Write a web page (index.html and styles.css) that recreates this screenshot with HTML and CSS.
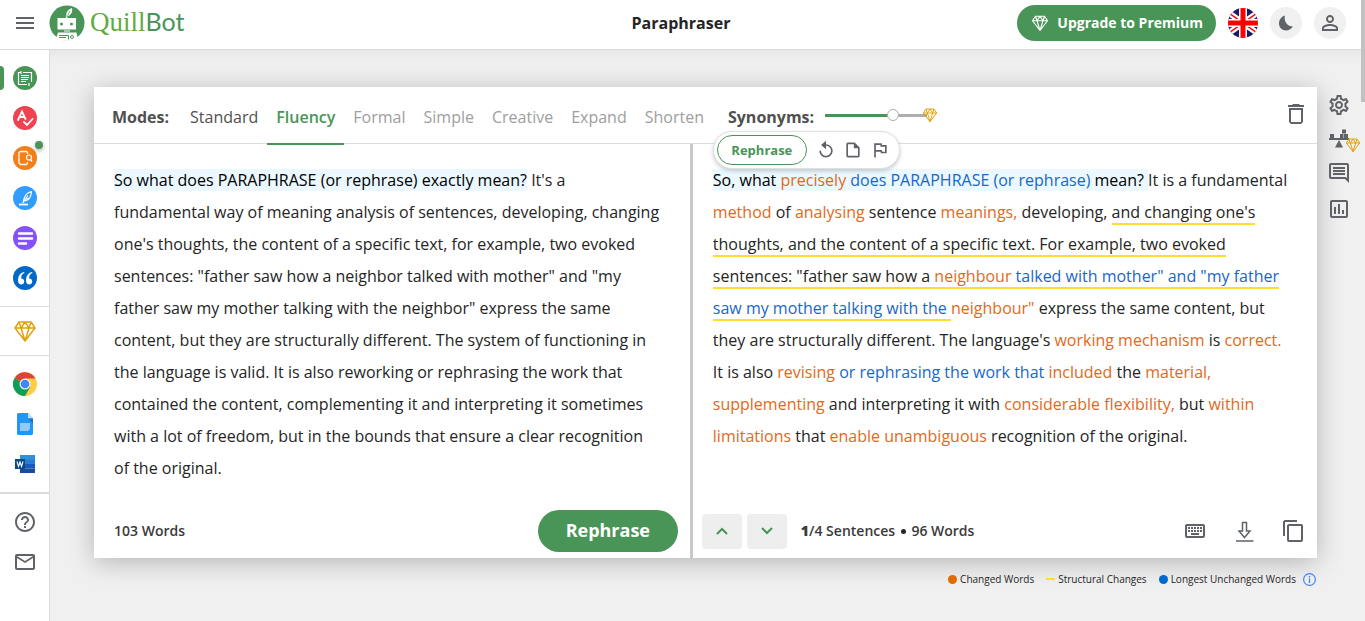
FILE: index.html
```html
<!DOCTYPE html>
<html lang="en">
<head>
    <meta charset="UTF-8">
    <meta name="viewport" content="width=device-width, initial-scale=1.0">
    <title>Paraphraser - QuillBot</title>
    <link rel="stylesheet" href="styles.css">
</head>
<body>
<!-- Shared icons -->
<svg class="sprite" aria-hidden="true">
    <symbol id="gem" viewBox="0 0 24 24">
        <path d="M6 3h12l4 6-10 13L2 9zM2 9h20M6 3l2 6 4-6 4 6 2-6M8 9l4 13 4-13" fill="none" stroke="currentColor" stroke-width="1.5" stroke-linejoin="round"/>
    </symbol>
</svg>

<header class="topbar">
    <div class="brand">
        <button class="icon-btn" aria-label="Menu">
            <svg width="18" height="12" viewBox="0 0 18 12" fill="#5f6368"><path d="M0 0h18v2H0zM0 5h18v2H0zM0 10h18v2H0z"/></svg>
        </button>
        <a class="logo" href="#">
            <svg width="36" height="36" viewBox="0 0 36 36">
                <circle cx="18" cy="18" r="17.5" fill="#499557"/>
                <path d="M17.500 12C16.500 8 18.500 4.500 23 3c.8 4-1 7.500-5.500 9z" fill="#fff"/>
                <path d="M17.500 13l3.500-7" stroke="#499557" stroke-width=".7"/>
                <path d="M8.500 13h8l1-2 1 2h8.500v11.500H8.500z" fill="#fff"/>
                <circle cx="12.500" cy="19" r="1.500" fill="#499557"/>
                <circle cx="22.500" cy="19" r="1.500" fill="#499557"/>
                <path d="M15 25.500h6v1h-6z" fill="#fff"/>
                <path d="M9 27.500h18.500l1 5-3 2.500-7 1-7-1-4-2.500z" fill="#fff"/>
                <path d="M10 30.500h9.500v4M10 32.500h7" fill="none" stroke="#499557"/>
                <circle cx="23" cy="32" r="1.500" fill="none" stroke="#499557"/>
            </svg>
            <span class="logo-text"><span class="logo-quill">Quill</span><span class="logo-bot">Bot</span></span>
        </a>
    </div>
    <h1>Paraphraser</h1>
    <div class="account">
        <button class="premium"><svg width="18" height="18"><use href="#gem"/></svg>Upgrade to Premium</button>
        <button class="icon-btn" aria-label="Language">
            <svg width="30" height="30" viewBox="0 0 30 30">
                <clipPath id="round"><circle cx="15" cy="15" r="15"/></clipPath>
                <g clip-path="url(#round)">
                    <path fill="#1a1a66" d="M0 0h30v30H0z"/>
                    <path d="M-2 3l34 24M-2 27L32 3" stroke="#fff" stroke-width="6"/>
                    <path d="M-2 3l34 24M-2 27L32 3" stroke="#f00" stroke-width="1.500"/>
                    <path d="M15 0v30M0 15h30" stroke="#fff" stroke-width="8"/>
                    <path d="M15 0v30M0 15h30" stroke="#f00" stroke-width="5"/>
                </g>
            </svg>
        </button>
        <button class="round-btn" aria-label="Dark mode">
            <svg width="16" height="16" viewBox="0 0 16 16" fill="#5f6368"><path d="M7 .5C5.500 5 8.500 11.500 15 11.500 13 14 10.500 15.500 8 15.500 4 15.500 1 12.500 1 8.500 1 4.500 3.500 1.500 7 .5z"/></svg>
        </button>
        <button class="round-btn" aria-label="Profile">
            <svg width="24" height="24" viewBox="0 0 24 24" fill="#5f6368"><path d="M12 5.900a2.100 2.100 0 1 1 0 4.200 2.100 2.100 0 0 1 0-4.200m0 9c2.970 0 6.100 1.460 6.100 2.100v1.100H5.900V17c0-.64 3.130-2.100 6.100-2.100M12 4C9.790 4 8 5.790 8 8s1.790 4 4 4 4-1.790 4-4-1.790-4-4-4zm0 9c-2.670 0-8 1.340-8 4v3h16v-3c0-2.660-5.330-4-8-4z"/></svg>
        </button>
    </div>
</header>

<div class="layout">
    <nav class="sidebar" aria-label="Tools">
        <div class="group">
            <a class="tool active" href="#" aria-label="Paraphraser">
                <svg width="24" height="24" viewBox="0 0 24 24">
                    <circle cx="12" cy="12" r="12" fill="#499557"/>
                    <path d="M10 6.500h8.500V16M14 18.500H5.500V6.500H8M8 5v3M16 17v3" fill="none" stroke="#fff" stroke-width="1.200"/>
                    <path d="M8 9.500h8M8 11.500h8M8 13.500h7M8 15.500h5" stroke="#fff"/>
                </svg>
            </a>
            <a class="tool" href="#" aria-label="Grammar Checker">
                <svg width="24" height="24" viewBox="0 0 24 24">
                    <circle cx="12" cy="12" r="12" fill="#ee4350"/>
                    <path d="M5 14L9 5.500l3.500 7.500M6.500 11h5M11 16l3 3 5.500-6" fill="none" stroke="#fff" stroke-width="1.800" stroke-linecap="round"/>
                </svg>
            </a>
            <a class="tool" href="#" aria-label="Plagiarism Checker">
                <svg width="24" height="24" viewBox="0 0 24 24">
                    <circle cx="12" cy="12" r="12" fill="#f57f17"/>
                    <path d="M14.500 8V6.500l-1-1H7.500l-1.500 1V17l1.500 1.500h6l1-1.500v-1" fill="none" stroke="#fff" stroke-width="1.300"/>
                    <circle cx="16" cy="11.500" r="2.500" fill="none" stroke="#fff" stroke-width="1.200"/>
                    <path d="M17.500 13.500l1.500 2" stroke="#fff" stroke-width="1.300"/>
                </svg>
                <span class="dot-new"></span>
            </a>
            <a class="tool" href="#" aria-label="Co-Writer">
                <svg width="24" height="24" viewBox="0 0 24 24">
                    <circle cx="12" cy="12" r="12" fill="#339cff"/>
                    <path d="M10 17l1-4c1-4 3-6.500 7.500-7.500-.5 3-.5 4.500-2 7-1.500 2-3 2-5 2.500M11 15.500l4-6M13 13l4-1" fill="none" stroke="#fff" stroke-width="1.200"/>
                    <path d="M6 18.500h9" stroke="#fff" stroke-width="1.800"/>
                </svg>
            </a>
            <a class="tool" href="#" aria-label="Summarizer">
                <svg width="24" height="24" viewBox="0 0 24 24">
                    <circle cx="12" cy="12" r="12" fill="#8352fd"/>
                    <path d="M6 7.500h13M6 12.500h13M6 17.500h7" stroke="#fff" stroke-width="2.500" stroke-linecap="round"/>
                </svg>
            </a>
            <a class="tool" href="#" aria-label="Citation Generator">
                <svg width="24" height="24" viewBox="0 0 24 24">
                    <circle cx="12" cy="12" r="12" fill="#0068c9"/>
                    <path id="quote" d="M11 6C7 7 5 10 5 14.500 5 17 6.500 18.500 8.200 18.500c1.700 0 3-1.200 3-3s-1.200-3-3-3C8.200 9.500 9 8 11.500 7z" fill="#fff"/>
                    <use href="#quote" x="8"/>
                </svg>
            </a>
        </div>
        <div class="group premium-group">
            <a class="tool gold" href="#" aria-label="Premium"><svg width="26" height="24"><use href="#gem"/></svg></a>
        </div>
        <div class="group extensions">
            <a class="tool" href="#" aria-label="Chrome extension">
                <svg width="24" height="24" viewBox="0 0 24 24">
                    <circle cx="12" cy="12" r="12" fill="#ffce44"/>
                    <path d="M12 12L1.600 6A12 12 0 0 0 12 24l5.200-9z" fill="#0f9d58"/>
                    <path d="M12 12L1.600 6A12 12 0 0 1 22.400 6.500H12z" fill="#db4437"/>
                    <circle cx="12" cy="12" r="5.500" fill="#f1f1f1"/>
                    <circle cx="12" cy="12" r="4.300" fill="#4285f4"/>
                </svg>
            </a>
            <a class="tool" href="#" aria-label="Google Docs extension">
                <svg width="16" height="22" viewBox="0 0 16 22">
                    <path d="M1 0h10l5 5.500V21l-1 1H1l-1-1V1z" fill="#2196f3"/>
                    <path d="M11 0l5 5.500h-5z" fill="#bbdefb"/>
                    <path d="M11 5.500h5V11z" fill="#1976d2"/>
                    <path d="M3 10h10v6l-2 2H3z" fill="#90caf9"/>
                </svg>
            </a>
            <a class="tool" href="#" aria-label="Word extension">
                <svg width="20" height="18" viewBox="0 0 20 18">
                    <path d="M5 0h15v5H5z" fill="#2b94d6"/>
                    <path d="M5 4.500h15V9H5z" fill="#2b7cd3"/>
                    <path d="M5 9h15v4.500H5z" fill="#185abd"/>
                    <path d="M5 13.500h15V18H5z" fill="#1a4a9c"/>
                    <path d="M0 4h10v10H0z" fill="#0a4a8c"/>
                    <path d="M2 6.500l1.500 5L5 7l1.500 4.500L8 6.500" fill="none" stroke="#fff" stroke-width="1.100"/>
                </svg>
            </a>
        </div>
        <div class="group help">
            <a class="tool" href="#" aria-label="Help">
                <svg width="24" height="24" viewBox="0 0 24 24" fill="#5f6368"><path d="M11 18h2v-2h-2v2zm1-16C6.480 2 2 6.480 2 12s4.480 10 10 10 10-4.480 10-10S17.520 2 12 2zm0 18c-4.410 0-8-3.590-8-8s3.590-8 8-8 8 3.590 8 8-3.590 8-8 8zm0-14c-2.210 0-4 1.790-4 4h2c0-1.100.9-2 2-2s2 .9 2 2c0 2-3 1.750-3 5h2c0-2.250 3-2.500 3-5 0-2.210-1.790-4-4-4z"/></svg>
            </a>
            <a class="tool" href="#" aria-label="Contact us">
                <svg width="24" height="24" viewBox="0 0 24 24" fill="#5f6368"><path d="M22 6c0-1.100-.9-2-2-2H4c-1.100 0-2 .9-2 2v12c0 1.100.9 2 2 2h16c1.100 0 2-.9 2-2V6zm-2 0l-8 5-8-5h16zm0 12H4V8l8 5 8-5v10z"/></svg>
            </a>
        </div>
    </nav>

    <main class="content">
        <section class="card">
            <div class="modes">
                <strong class="modes-label">Modes:</strong>
                <button class="mode free">Standard</button>
                <button class="mode selected">Fluency</button>
                <button class="mode">Formal</button>
                <button class="mode">Simple</button>
                <button class="mode">Creative</button>
                <button class="mode">Expand</button>
                <button class="mode">Shorten</button>
                <label class="synonyms-label" for="synonyms">Synonyms:</label>
                <input type="range" id="synonyms" min="0" max="100" value="69">
                <svg class="slider-gem" width="16" height="16"><use href="#gem"/></svg>
                <button class="icon-btn trash" aria-label="Delete text">
                    <svg width="16" height="22" viewBox="0 0 16 22" fill="#5f6368"><path d="M5 0h6l1 1h4v2H0V1h4zM1 4h14v14l-2 2H3l-2-2zm2 2v12h10V6z"/></svg>
                </button>
            </div>

            <div class="panes">
                <!-- Original text -->
                <div class="pane">
                    <p class="text"><span class="current">So what does PARAPHRASE (or rephrase) exactly mean?</span> It's a<br>
                        fundamental way of meaning analysis of sentences, developing, changing<br>
                        one's thoughts, the content of a specific text, for example, two evoked<br>
                        sentences: "father saw how a neighbor talked with mother" and "my<br>
                        father saw my mother talking with the neighbor" express the same<br>
                        content, but they are structurally different. The system of functioning in<br>
                        the language is valid. It is also reworking or rephrasing the work that<br>
                        contained the content, complementing it and interpreting it sometimes<br>
                        with a lot of freedom, but in the bounds that ensure a clear recognition<br>
                        of the original.</p>
                    <div class="pane-footer">
                        <span class="count">103 Words</span>
                        <button class="rephrase">Rephrase</button>
                    </div>
                </div>

                <!-- Result -->
                <div class="pane result">
                    <div class="popup">
                        <button class="popup-rephrase">Rephrase</button>
                        <button class="icon-btn" aria-label="Revert">
                            <svg width="20" height="20" viewBox="0 0 24 24" fill="#5f6368"><path d="M12 5V1L6 6l6 5V7c3.310 0 6 2.690 6 6s-2.690 6-6 6-6-2.690-6-6H4c0 4.420 3.580 8 8 8s8-3.580 8-8-3.580-8-8-8z"/></svg>
                        </button>
                        <button class="icon-btn" aria-label="Copy sentence">
                            <svg width="20" height="20" viewBox="0 0 24 24" fill="#5f6368"><path d="M14 3H6c-1.100 0-2 .9-2 2v14c0 1.100.9 2 2 2h12c1.100 0 2-.9 2-2V9zM6 19V5h7v5h5v9z"/></svg>
                        </button>
                        <button class="icon-btn" aria-label="Report">
                            <svg width="20" height="20" viewBox="0 0 24 24" fill="#5f6368"><path d="M12.360 6l.4 2H18v6h-3.360l-.4-2H7V6h5.360M14 4H5v17h2v-7h5.600l.4 2h7V6h-5.600L14 4z"/></svg>
                        </button>
                    </div>
                    <p class="text"><span class="current">So, what <span class="changed">precisely</span> <span class="same">does PARAPHRASE (or rephrase)</span> mean? </span>It is a fundamental<br>
                        <span class="changed">method</span> of <span class="changed">analysing</span> sentence <span class="changed">meanings,</span> developing, <span class="structural">and changing one's<br>
                        thoughts, and the content of a specific text. For example, two evoked<br>
                        sentences: "father saw how a <span class="changed">neighbour</span> <span class="same">talked with mother" and "my father<br>
                        saw my mother talking with the</span> </span><span class="changed">neighbour"</span> express the same content, but<br>
                        they are structurally different. The language's <span class="changed">working mechanism</span> is <span class="changed">correct.</span><br>
                        It is also <span class="changed">revising</span> <span class="same">or rephrasing the work that</span> <span class="changed">included</span> the <span class="changed">material,</span><br>
                        <span class="changed">supplementing</span> and interpreting it with <span class="changed">considerable flexibility,</span> but <span class="changed">within</span><br>
                        <span class="changed">limitations</span> that <span class="changed">enable unambiguous</span> recognition of the original.</p>
                    <div class="pane-footer">
                        <button class="step" aria-label="Previous sentence">
                            <svg width="12" height="8" viewBox="0 0 12 8"><path d="M1 7l5-5 5 5" fill="none" stroke="#499557" stroke-width="2"/></svg>
                        </button>
                        <button class="step" aria-label="Next sentence">
                            <svg width="12" height="8" viewBox="0 0 12 8"><path d="M1 1l5 5 5-5" fill="none" stroke="#499557" stroke-width="2"/></svg>
                        </button>
                        <span class="count"><b>1</b>/4 Sentences <i class="bullet"></i> 96 Words</span>
                        <div class="actions">
                            <button class="icon-btn" aria-label="Keyboard shortcuts">
                                <svg width="24" height="24" viewBox="0 0 24 24" fill="#5f6368"><path d="M20 7v10H4V7h16m0-2H4c-1.100 0-1.990.9-1.990 2L2 17c0 1.100.9 2 2 2h16c1.100 0 2-.9 2-2V7c0-1.100-.9-2-2-2zm-9 3h2v2h-2V8zm0 3h2v2h-2v-2zM8 8h2v2H8V8zm0 3h2v2H8v-2zm-3 0h2v2H5v-2zm0-3h2v2H5V8zm3 6h8v2H8v-2zm6-3h2v2h-2v-2zm0-3h2v2h-2V8zm3 3h2v2h-2v-2zm0-3h2v2h-2V8z"/></svg>
                            </button>
                            <button class="icon-btn" aria-label="Download">
                                <svg width="24" height="24" viewBox="0 0 24 24" fill="none" stroke="#5f6368" stroke-width="1.500"><path d="M10.500 3.500h4v8.500h3.500l-5.500 6.500L7 12h3.500z"/><path d="M4 22h17.500" stroke="#85888c" stroke-width="2"/></svg>
                            </button>
                            <button class="icon-btn" aria-label="Copy text">
                                <svg width="24" height="24" viewBox="0 0 24 24" fill="none" stroke="#5f6368" stroke-width="2"><path d="M3 17V3l1-1h12"/><rect x="7" y="6" width="14" height="16" rx="1"/></svg>
                            </button>
                        </div>
                    </div>
                </div>
            </div>
        </section>

        <div class="legend">
            <span class="legend-item"><i class="orange"></i>Changed Words</span>
            <span class="legend-item"><i class="yellow"></i>Structural Changes</span>
            <span class="legend-item"><i class="blue"></i>Longest Unchanged Words</span>
            <svg width="13" height="13" viewBox="0 0 13 13" fill="none" stroke="#4285f4"><circle cx="6.500" cy="6.500" r="5.900" stroke-width="1.200"/><path d="M6.500 5.500V10M6.500 3v1.500" stroke-width="1.300"/></svg>
        </div>
    </main>

    <aside class="rail" aria-label="Options">
        <button class="icon-btn" aria-label="Settings">
            <svg width="24" height="24" viewBox="0 0 24 24" fill="#5f6368"><path d="M19.430 12.980c.04-.32.07-.64.07-.98s-.03-.66-.07-.98l2.110-1.650c.19-.15.24-.42.12-.64l-2-3.460c-.09-.16-.26-.25-.44-.25-.06 0-.12.010-.17.030l-2.490 1c-.52-.4-1.080-.73-1.690-.98l-.38-2.650C14.460 2.180 14.250 2 14 2h-4c-.25 0-.46.18-.49.42l-.38 2.650c-.61.25-1.170.59-1.690.98l-2.490-1c-.06-.02-.12-.03-.18-.03-.17 0-.34.09-.43.25l-2 3.460c-.13.22-.07.49.12.64l2.110 1.650c-.04.32-.07.65-.07.98s.03.66.07.98l-2.110 1.650c-.19.15-.24.42-.12.64l2 3.460c.09.16.26.25.44.25.06 0 .12-.01.17-.03l2.490-1c.52.4 1.080.73 1.690.98l.38 2.650c.03.24.24.42.49.42h4c.25 0 .46-.18.49-.42l.38-2.650c.61-.25 1.170-.59 1.690-.98l2.490 1c.06.02.12.03.18.03.17 0 .34-.09.43-.25l2-3.460c.12-.22.07-.49-.12-.64l-2.110-1.650zm-1.980-1.710c.04.31.05.52.05.73 0 .21-.02.43-.05.73l-.14 1.130.89.7 1.080.84-.7 1.210-1.270-.51-1.040-.42-.9.68c-.43.32-.84.56-1.250.73l-1.060.43-.16 1.130-.2 1.350h-1.400l-.19-1.350-.16-1.130-1.060-.43c-.43-.18-.83-.41-1.230-.71l-.91-.7-1.060.43-1.270.51-.7-1.210 1.080-.84.89-.7-.14-1.130c-.03-.31-.05-.54-.05-.74s.02-.43.05-.73l.14-1.130-.89-.7-1.080-.84.7-1.210 1.270.51 1.040.42.9-.68c.43-.32.84-.56 1.250-.73l1.060-.43.16-1.130.2-1.350h1.390l.19 1.350.16 1.130 1.060.43c.43.18.83.41 1.230.71l.91.7 1.060-.43 1.270-.51.7 1.210-1.070.85-.89.7.14 1.130zM12 8c-2.210 0-4 1.790-4 4s1.790 4 4 4 4-1.790 4-4-1.790-4-4-4zm0 6c-1.100 0-2-.9-2-2s.9-2 2-2 2 .9 2 2-.9 2-2 2z"/></svg>
        </button>
        <button class="icon-btn compare" aria-label="Compare modes">
            <svg width="20" height="20" viewBox="0 0 20 20" fill="#5f6368"><path d="M0 9h20v2H0zM1 5h4v4H1zM11 5h3.500v4H11zM15 5h4v4h-4zM13 .5h4v4h-4zM10 11l4 7.500H6z"/></svg>
            <svg class="compare-gem" width="16" height="16"><use href="#gem"/></svg>
        </button>
        <button class="icon-btn" aria-label="Comments">
            <svg width="24" height="24" viewBox="0 0 24 24" fill="#5f6368"><path d="M21.990 4c0-1.100-.89-2-1.990-2H4c-1.100 0-2 .9-2 2v12c0 1.100.9 2 2 2h14l4 4-.01-18zM20 4v13.170L18.830 16H4V4h16zM6 12h12v2H6zm0-3h12v2H6zm0-3h12v2H6z"/></svg>
        </button>
        <button class="icon-btn" aria-label="Statistics">
            <svg width="24" height="24" viewBox="0 0 24 24" fill="#5f6368"><path d="M9 17H7v-7h2v7zm4 0h-2V7h2v10zm4 0h-2v-4h2v4zm2 2H5V5h14v14zm0-16H5c-1.100 0-2 .9-2 2v14c0 1.100.9 2 2 2h14c1.100 0 2-.9 2-2V5c0-1.100-.9-2-2-2z"/></svg>
        </button>
    </aside>
</div>
<div class="scroll-thumb"></div>
</body>
</html>
```
FILE: styles.css
```css
* {
    box-sizing: border-box;
}
body {
    margin: 0;
    min-height: 100vh;
    padding-right: 4px;
    display: flex;
    flex-direction: column;
    font-family: "Open Sans", sans-serif;
    font-size: 16px;
    color: #252525;
    background-color: #f0f0f0;
}
svg {
    display: block;
    flex: none;
}
button {
    font-family: inherit;
    padding: 0;
    border: none;
    background: none;
    cursor: pointer;
}
.sprite {
    position: absolute;
    width: 0;
    height: 0;
}
.icon-btn {
    display: flex;
    align-items: center;
    justify-content: center;
}

/* Header */
.topbar {
    display: grid;
    grid-template-columns: 1fr auto 1fr;
    align-items: center;
    height: 50px;
    margin-right: -4px;
    padding: 0 19px 4px 16px;
    background-color: #fff;
    border-bottom: 1px solid #dadce0;
    box-shadow: 0 2px 16px rgba(0, 0, 0, 0.06);
}
.brand {
    display: flex;
    align-items: center;
    gap: 15px;
}
.logo {
    display: flex;
    align-items: center;
    gap: 5px;
    text-decoration: none;
}
.logo-text {
    line-height: 32px;
}
.logo-quill {
    font-family: "Liberation Serif", serif;
    font-size: 27px;
    color: #62ab3f;
}
.logo-bot {
    font-family: Lato, sans-serif;
    font-size: 25px;
    color: #499557;
}
h1 {
    margin: 0;
    font-size: 16px;
    font-weight: 700;
}
.account {
    display: flex;
    align-items: center;
    justify-content: flex-end;
    gap: 12px;
}
.premium {
    display: flex;
    align-items: center;
    gap: 8px;
    height: 36px;
    padding: 0 13px 0 14px;
    border-radius: 18px;
    background-color: #499557;
    color: #fff;
    font-size: 14px;
    font-weight: 700;
}
.round-btn {
    display: flex;
    align-items: center;
    justify-content: center;
    width: 32px;
    height: 32px;
    border-radius: 50%;
    background-color: #f0f0f0;
}

/* Sidebar */
.layout {
    flex: 1;
    display: flex;
}
.sidebar {
    flex: none;
    width: 50px;
    background-color: #fff;
    border-right: 1px solid #dadce0;
    z-index: 1;
}
.group {
    padding: 8px 0;
    border-bottom: 1px solid #dadce0;
}
.premium-group {
    padding: 4px 0;
}
.extensions {
    border-bottom-width: 2px;
}
.help {
    border-bottom: none;
}
.tool {
    position: relative;
    display: flex;
    align-items: center;
    justify-content: center;
    height: 40px;
}
.tool.active::before {
    content: "";
    position: absolute;
    left: 0;
    width: 4px;
    height: 24px;
    border-radius: 0 4px 4px 0;
    background-color: #499557;
}
.gold, .slider-gem, .compare-gem {
    color: #e2a20c;
}
.dot-new {
    position: absolute;
    top: 3px;
    right: 6px;
    width: 8px;
    height: 8px;
    border-radius: 50%;
    background-color: #499557;
    box-shadow: 0 2px 4px rgba(0, 0, 0, 0.3);
}

/* Editor card */
.content {
    flex: 1;
    min-width: 0;
    padding: 37px 0 20px 44px;
}
.card {
    background-color: #fff;
    box-shadow: 0 4px 24px rgba(0, 0, 0, 0.25);
}
.modes {
    display: flex;
    align-items: center;
    height: 57px;
    padding: 0 13px 0 18px;
    border-bottom: 1px solid #dadce0;
    white-space: nowrap;
}
.modes-label, .synonyms-label {
    color: #505050;
    font-weight: 700;
    padding-top: 3px;
}
.modes-label {
    margin-right: 12px;
}
.mode {
    align-self: stretch;
    margin-bottom: -2px;
    padding: 3px 9px 0;
    border-bottom: 2px solid transparent;
    font-size: 16px;
    color: #9e9e9e;
}
.mode.free {
    color: #505050;
}
.mode.selected {
    color: #499557;
    font-weight: 600;
    border-color: #499557;
}
.synonyms-label {
    margin: 0 11px 0 15px;
}
#synonyms {
    appearance: none;
    width: 102px;
    height: 12px;
    margin: 0;
    background: linear-gradient(to right, #499557 68%, #adadad 68%) center / 100% 3px no-repeat;
}
#synonyms::-webkit-slider-thumb {
    appearance: none;
    width: 12px;
    height: 12px;
    border: 1px solid #adadad;
    border-radius: 50%;
    background-color: #fff;
}
.slider-gem {
    margin-left: -5px;
}
.trash {
    margin-left: auto;
}
.panes {
    display: grid;
    grid-template-columns: 38fr 40fr;
}
.pane {
    position: relative;
    display: flex;
    flex-direction: column;
    min-width: 0;
}
.result {
    border-left: 3px solid #c8c8c8;
}
.text {
    flex: 1;
    margin: 0;
    padding: 20px 0 20px 20px;
    line-height: 32px;
}
.current {
    background-color: #ebf8ff;
    color: #000;
}
.changed {
    color: #e2691b;
}
.same {
    color: #1967c8;
}
.structural {
    border-bottom: 2px solid #ffdc2e;
}
.pane-footer {
    display: flex;
    align-items: center;
    height: 54px;
    padding: 0 12px 0 20px;
}
.result .pane-footer {
    gap: 5px;
    padding-left: 9px;
}
.count {
    padding-bottom: 1px;
    font-size: 14px;
    font-weight: 600;
    color: #3a3a3a;
}
.result .count {
    margin-left: 9px;
}
.bullet {
    display: inline-block;
    width: 5px;
    height: 5px;
    margin: 0 2px;
    border-radius: 50%;
    background-color: #252525;
    vertical-align: 2px;
}
.rephrase {
    width: 140px;
    height: 42px;
    margin-left: auto;
    padding-bottom: 2px;
    border-radius: 21px;
    background-color: #499557;
    color: #fff;
    font-size: 18px;
    font-weight: 700;
}
.step {
    display: flex;
    align-items: center;
    justify-content: center;
    width: 40px;
    height: 35px;
    border-radius: 4px;
    background-color: #eee;
}
.actions {
    display: flex;
    gap: 25px;
    margin-left: auto;
}

/* Sentence toolbar over the result */
.popup {
    position: absolute;
    top: -13px;
    left: 20px;
    display: flex;
    align-items: center;
    gap: 7px;
    height: 38px;
    padding: 0 9px 0 3px;
    border: 1px solid #e0e0e0;
    border-radius: 19px;
    background-color: #fff;
    box-shadow: 0 2px 4px rgba(0, 0, 0, 0.2);
}
.popup-rephrase {
    width: 90px;
    height: 30px;
    margin-right: 2px;
    border: 1px solid #499557;
    border-radius: 15px;
    color: #499557;
    font-size: 13px;
    font-weight: 700;
}

/* Legend */
.legend {
    display: flex;
    align-items: center;
    justify-content: flex-end;
    gap: 12px;
    margin-top: 14px;
    padding-right: 1px;
    font-size: 10px;
    line-height: 14px;
}
.legend svg {
    margin-left: -5px;
}
.legend-item {
    display: flex;
    align-items: center;
    gap: 3px;
}
.legend-item i {
    width: 9px;
    height: 9px;
    border-radius: 50%;
}
.legend-item .orange {
    background-color: #e06c00;
}
.legend-item .yellow {
    height: 2px;
    border-radius: 0;
    background-color: #ffdc2e;
}
.legend-item .blue {
    background-color: #0068d0;
}

/* Right rail */
.rail {
    display: flex;
    flex-direction: column;
    align-items: center;
    gap: 12px;
    width: 44px;
    padding-top: 43px;
}
.compare {
    position: relative;
}
.compare-gem {
    position: absolute;
    top: 8px;
    left: 16px;
}
.scroll-thumb {
    position: absolute;
    top: 0;
    right: 0;
    width: 4px;
    height: 102px;
    background-color: #c1c1c1;
}
```
